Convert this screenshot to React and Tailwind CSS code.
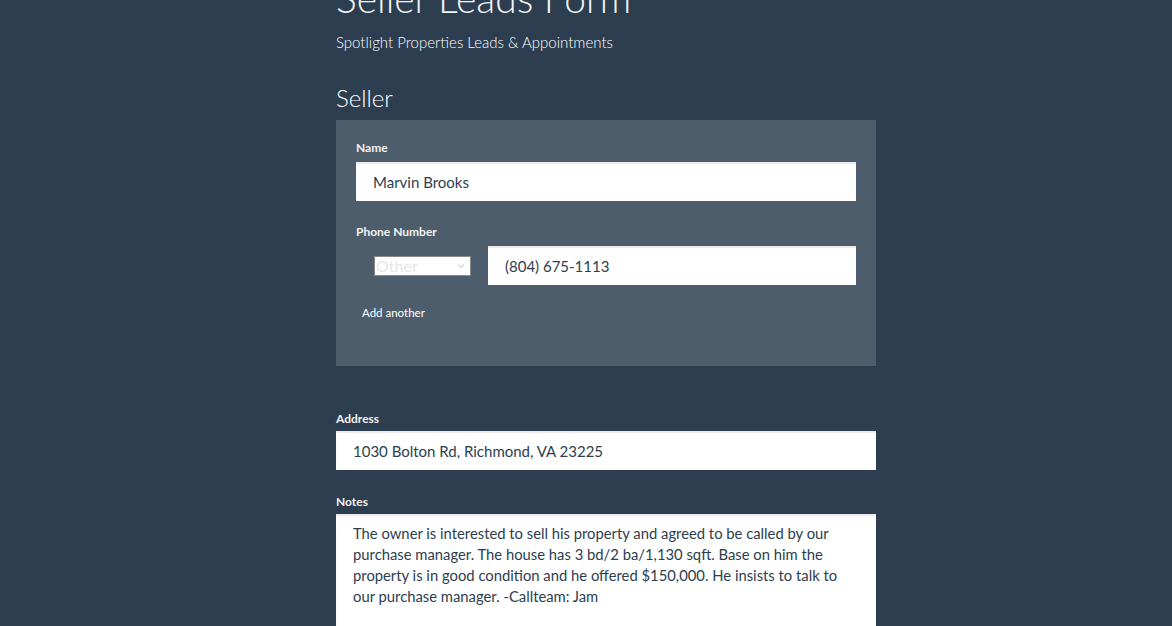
import React, { useState } from "react";

const inputCls =
  "block w-full h-[39px] px-[17px] bg-white text-[15px] text-[#2c3e50] shadow-[inset_0_2px_1px_rgba(0,0,0,0.08)] outline-none";

const Label = ({ children, className = "" }) => (
  <label className={"block text-[12px] leading-[16px] font-bold text-[#f2f2f2] " + className}>{children}</label>
);

export default function App() {
  const [name, setName] = useState("Marvin Brooks");
  const [phone, setPhone] = useState("(804) 675-1113");
  const [address, setAddress] = useState("1030 Bolton Rd, Richmond, VA 23225");
  const [notes, setNotes] = useState(
    "The owner is interested to sell his property and agreed to be called by our purchase manager. The house has 3 bd/2 ba/1,130 sqft. Base on him the property is in good condition and he offered $150,000. He insists to talk to our purchase manager. -Callteam: Jam"
  );

  return (
    <div className="min-h-[626px] bg-[#2c3e50] overflow-hidden font-['Lato','Open_Sans',sans-serif] text-white">
      <div className="w-[540px] ml-[336px] -mt-[23px] pb-10">
        <h1 className="text-[39px] font-light leading-[43px] text-[#f4f4f4]">Seller Leads Form</h1>
        <p className="mt-[12px] text-[15px] font-light leading-[20px]">Spotlight Properties Leads &amp; Appointments</p>

        <h3 className="mt-[31px] text-[24px] font-light leading-[30px]">Seller</h3>

        <div className="mt-[7px] bg-[#4e5d6c] px-5 pt-5 pb-[46px]">
          <Label>Name</Label>
          <input className={inputCls + " mt-[6px]"} value={name} onChange={(e) => setName(e.target.value)} />

          <Label className="mt-[23px]">Phone Number</Label>
          <div className="mt-[6px] flex items-center">
            <div className="ml-[18px] w-[97px] h-[20px] bg-white border border-[#8a8a8a] flex items-center justify-between pl-[1px] pr-[4px]">
              <span className="text-[16px] leading-none text-[#e6e6e6]">Other</span>
              <svg width="10" height="10" viewBox="0 0 10 10" fill="none" stroke="#d8d8d8" strokeWidth="1.4">
                <path d="M2 3.5 L5 6.5 L8 3.5" />
              </svg>
            </div>
            <input
              className={inputCls + " ml-[17px] flex-1 w-auto"}
              value={phone}
              onChange={(e) => setPhone(e.target.value)}
            />
          </div>

          <button className="block mt-[21px] ml-[6px] text-[11.5px] leading-[14px] text-white">Add another</button>
        </div>

        <Label className="mt-[45px]">Address</Label>
        <input className={inputCls + " mt-[4px]"} value={address} onChange={(e) => setAddress(e.target.value)} />

        <Label className="mt-[24px]">Notes</Label>
        <textarea
          className="mt-[4px] block w-full h-[150px] px-[17px] pt-[9px] bg-white text-[14.8px] leading-[21px] text-[#2c3e50] resize-none outline-none shadow-[inset_0_2px_1px_rgba(0,0,0,0.08)]"
          value={notes}
          onChange={(e) => setNotes(e.target.value)}
        />
      </div>
    </div>
  );
}
